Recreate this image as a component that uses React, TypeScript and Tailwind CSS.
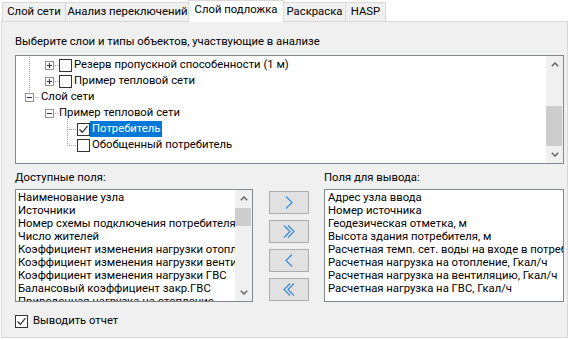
import React from "react";

const font = "font-['Roboto','Liberation_Sans',sans-serif]";

const Dots = ({ pts }: { pts: [number, number][] }) => (
  <>
    {pts.map(([x, y], i) => (
      <rect key={i} x={x} y={y} width="1" height="1" fill="#a0a0a0" />
    ))}
  </>
);

const vline = (x: number, y1: number, y2: number): [number, number][] => {
  const out: [number, number][] = [];
  for (let y = y1; y <= y2; y += 2) out.push([x, y]);
  return out;
};
const hline = (y: number, x1: number, x2: number): [number, number][] => {
  const out: [number, number][] = [];
  for (let x = x1; x <= x2; x += 2) out.push([x, y]);
  return out;
};

const Expander = ({ open }: { open?: boolean }) => (
  <svg width="9" height="9" className="shrink-0">
    <rect x="0.5" y="0.5" width="8" height="8" fill="#fff" stroke="#919191" />
    <path d="M2 4.5h5" stroke="#2b3548" />
    {!open && <path d="M4.5 2v5" stroke="#2b3548" />}
  </svg>
);

const Check = ({ checked }: { checked?: boolean }) => (
  <svg width="13" height="13" className="shrink-0">
    <rect x="0.5" y="0.5" width="12" height="12" fill="#fff" stroke="#333" />
    {checked && (
      <path d="M2.5 6.5l2.8 2.8 5.2-6.2" fill="none" stroke="#333" strokeWidth="1.3" />
    )}
  </svg>
);

const Arrow = ({ up }: { up?: boolean }) => (
  <svg width="8" height="5">
    <path
      d={up ? "M0.8 4.2L4 1l3.2 3.2" : "M0.8 0.8L4 4l3.2-3.2"}
      fill="none"
      stroke="#606060"
      strokeWidth="1.4"
    />
  </svg>
);

const ScrollBar = ({ thumbTop, thumbH }: { thumbTop: number; thumbH: number }) => (
  <div className="w-[17px] shrink-0 bg-[#f0f0f0] flex flex-col">
    <div className="h-[17px] flex items-center justify-center">
      <Arrow up />
    </div>
    <div className="flex-1">
      <div className="bg-[#cdcdcd] mr-px" style={{ marginTop: thumbTop, height: thumbH }} />
    </div>
    <div className="h-[17px] flex items-center justify-center">
      <Arrow />
    </div>
  </div>
);

const Chevron = ({ dir, double }: { dir: "r" | "l"; double?: boolean }) => {
  const one = (x: number) =>
    dir === "r" ? `M${x} 0.5l6 6-6 6` : `M${x + 6} 0.5l-6 6 6 6`;
  return (
    <svg width={double ? 12 : 8} height="13">
      <path d={one(1)} fill="none" stroke="#3c8ad8" strokeWidth="1.2" />
      {double && <path d={one(5)} fill="none" stroke="#3c8ad8" strokeWidth="1.2" />}
    </svg>
  );
};

const available = [
  "Наименование узла",
  "Источники",
  "Номер схемы подключения потребителя",
  "Число жителей",
  "Коэффициент изменения нагрузки отопления",
  "Коэффициент изменения нагрузки вентиляции",
  "Коэффициент изменения нагрузки ГВС",
  "Балансовый коэффициент закр.ГВС",
  "Приведенная нагрузка на отопление",
];

const output = [
  "Адрес узла ввода",
  "Номер источника",
  "Геодезическая отметка, м",
  "Высота здания потребителя, м",
  "Расчетная темп. сет. воды на входе в потребителя",
  "Расчетная нагрузка на отопление, Гкал/ч",
  "Расчетная нагрузка на вентиляцию, Гкал/ч",
  "Расчетная нагрузка на ГВС, Гкал/ч",
];

export default function App() {
  const tab =
    "h-[19px] border border-b-0 border-[#d9d9d9] bg-[#f0f0f0] flex items-center justify-center pt-[1px] whitespace-nowrap";
  const btn = "h-[23px] bg-[#e1e1e1] border border-[#adadad] flex items-center justify-center";
  return (
    <div className={`w-[570px] h-[340px] bg-white text-[11.3px] text-black overflow-hidden ${font}`}>
      {/* tabs */}
      <div className="h-[21px] flex items-end pl-[2px] relative z-10">
        <div className={`${tab} w-[64px]`}>Слой сети</div>
        <div className={`${tab} w-[125px] -ml-px`}>Анализ переключений</div>
        <div className="h-[22px] -mb-px w-[96px] -ml-[2px] bg-white border border-b-0 border-[#d9d9d9] flex items-center justify-center pb-[2px] whitespace-nowrap relative z-10">
          Слой подложка
        </div>
        <div className={`${tab} w-[63px] -ml-px`}>Раскраска</div>
        <div className={`${tab} w-[41px] -ml-px`}>HASP</div>
      </div>

      {/* page */}
      <div className="ml-px w-[567px] h-[317px] border border-[#d9d9d9] bg-[#f0f0f0] pl-[13px] pt-[12px]">
        <div className="h-[15px] leading-[15px]">Выберите слои и типы объектов, участвующие в анализе</div>

        <div className="mt-[6px] w-[549px] h-[109px] border border-[#828790] bg-white flex">
          <div className="flex-1 relative pt-px leading-[16px] whitespace-nowrap">
            <svg className="absolute inset-0 pointer-events-none" width="530" height="107">
              <Dots
                pts={[
                  ...vline(13, 1, 37),
                  ...hline(9, 39, 41),
                  ...hline(25, 39, 41),
                  ...hline(41, 19, 21),
                  ...hline(57, 39, 41),
                  ...vline(51, 63, 89),
                  ...hline(73, 53, 59),
                  ...hline(89, 53, 59),
                ]}
              />
            </svg>
            <div className="h-[16px] flex items-center pl-[29px]">
              <Expander />
              <div className="ml-[5px]"><Check /></div>
              <span className="px-[2px]">Резерв пропускной способенности (1 м)</span>
            </div>
            <div className="h-[16px] flex items-center pl-[29px]">
              <Expander />
              <div className="ml-[5px]"><Check /></div>
              <span className="px-[2px]">Пример тепловой сети</span>
            </div>
            <div className="h-[16px] flex items-center pl-[9px]">
              <Expander open />
              <span className="ml-[5px] px-[2px]">Слой сети</span>
            </div>
            <div className="h-[16px] flex items-center pl-[29px]">
              <Expander open />
              <span className="ml-[3px] px-[2px]">Пример тепловой сети</span>
            </div>
            <div className="h-[16px] flex items-center pl-[61px]">
              <Check checked />
              <span className="px-[2px] h-[16px] bg-[#0078d7] text-white">Потребитель</span>
            </div>
            <div className="h-[16px] flex items-center pl-[61px]">
              <Check />
              <span className="px-[2px]">Обобщенный потребитель</span>
            </div>
          </div>
          <ScrollBar thumbTop={33} thumbH={40} />
        </div>

        <div className="mt-[6px] w-[549px] flex h-[15px] leading-[15px]">
          <div className="w-[309px]">Доступные поля:</div>
          <div>Поля для вывода:</div>
        </div>

        <div className="mt-[4px] flex w-[549px]">
          <div className="w-[238px] h-[113px] border border-[#828790] bg-white flex">
            <div className="flex-1 overflow-hidden pt-[1px] pl-[2px] leading-[13px] whitespace-nowrap">
              {available.map((t) => (
                <div key={t}>{t}</div>
              ))}
            </div>
            <ScrollBar thumbTop={1} thumbH={18} />
          </div>

          <div className="ml-[16px] w-[40px] pt-[2px] flex flex-col gap-[6px]">
            <button className={btn}>
              <Chevron dir="r" />
            </button>
            <button className={btn}>
              <Chevron dir="r" double />
            </button>
            <button className={btn}>
              <Chevron dir="l" />
            </button>
            <button className={btn}>
              <Chevron dir="l" double />
            </button>
          </div>

          <div className="ml-[15px] w-[240px] h-[113px] border border-[#828790] bg-white overflow-hidden pt-[1px] pl-[3px] leading-[13px] whitespace-nowrap">
            {output.map((t) => (
              <div key={t}>{t}</div>
            ))}
          </div>
        </div>

        <div className="mt-[12px] h-[15px] flex items-center gap-[5px]">
          <Check checked />
          <span>Выводить отчет</span>
        </div>
      </div>
    </div>
  );
}
